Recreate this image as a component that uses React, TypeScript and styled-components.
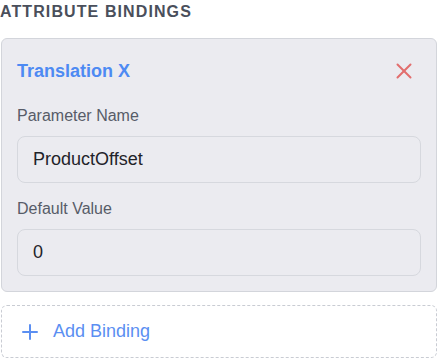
import React from "react";
import styled, { createGlobalStyle } from "styled-components";

const GlobalStyle = createGlobalStyle`
  html, body {
    margin: 0;
    padding: 0;
    background: #ffffff;
    font-family: "Liberation Sans", Arial, Helvetica, sans-serif;
  }
  * { box-sizing: border-box; }
`;

const Panel = styled.div`
  width: 438px;
  padding: 2px 1px 0 1px;
  display: flex;
  flex-direction: column;
`;

const SectionTitle = styled.h3`
  margin: 0 0 16px -1px;
  font-size: 16px;
  line-height: 20px;
  font-weight: 700;
  letter-spacing: 1.1px;
  color: #4a4f5b;
  text-transform: uppercase;
`;

const Card = styled.div`
  background: #ebebf0;
  border: 1px solid #d3d5db;
  border-radius: 6px;
  padding: 15px;
  display: flex;
  flex-direction: column;
`;

const CardHeader = styled.div`
  height: 34px;
  display: flex;
  align-items: center;
  justify-content: space-between;
  margin-bottom: 18px;
`;

const BindingName = styled.span`
  font-size: 18px;
  font-weight: 700;
  color: #4d8af3;
  line-height: 24px;
`;

const RemoveButton = styled.button`
  width: 34px;
  height: 34px;
  border: none;
  background: transparent;
  padding: 0;
  display: flex;
  align-items: center;
  justify-content: center;
  color: #e26e6e;
  cursor: pointer;
`;

const Field = styled.div<{ $last?: boolean }>`
  display: flex;
  flex-direction: column;
  margin-bottom: ${(p) => (p.$last ? "0" : "16px")};
`;

const Label = styled.label`
  font-size: 16px;
  line-height: 20px;
  color: #575c68;
  margin-bottom: 10px;
`;

const TextInput = styled.input`
  height: 47px;
  width: 100%;
  border: 1px solid #d6d8de;
  border-radius: 8px;
  background: #ebebf0;
  padding: 0 15px;
  font-family: inherit;
  font-size: 18px;
  color: #1f2329;
  outline: none;
`;

const AddButton = styled.button`
  margin-top: 13px;
  height: 53px;
  width: 100%;
  border: 1px dashed #c9ccd3;
  border-radius: 6px;
  background: #ffffff;
  display: flex;
  align-items: center;
  gap: 11px;
  padding: 0 0 0 16px;
  font-family: inherit;
  font-size: 18px;
  color: #5b8ff2;
  cursor: pointer;
`;

const CloseIcon = () => (
  <svg width="16" height="16" viewBox="0 0 16 16" fill="none" stroke="currentColor" strokeWidth="2" strokeLinecap="round">
    <line x1="1.5" y1="1.5" x2="14.5" y2="14.5" />
    <line x1="14.5" y1="1.5" x2="1.5" y2="14.5" />
  </svg>
);

const PlusIcon = () => (
  <svg width="24" height="24" viewBox="0 0 24 24" fill="none" stroke="currentColor" strokeWidth="2" strokeLinecap="round">
    <line x1="12" y1="5" x2="12" y2="19" />
    <line x1="5" y1="12" x2="19" y2="12" />
  </svg>
);

export default function App() {
  return (
    <>
      <GlobalStyle />
      <Panel>
        <SectionTitle>Attribute Bindings</SectionTitle>
        <Card>
          <CardHeader>
            <BindingName>Translation X</BindingName>
            <RemoveButton aria-label="Remove binding">
              <CloseIcon />
            </RemoveButton>
          </CardHeader>
          <Field>
            <Label>Parameter Name</Label>
            <TextInput defaultValue="ProductOffset" />
          </Field>
          <Field $last>
            <Label>Default Value</Label>
            <TextInput defaultValue="0" />
          </Field>
        </Card>
        <AddButton>
          <PlusIcon />
          Add Binding
        </AddButton>
      </Panel>
    </>
  );
}
